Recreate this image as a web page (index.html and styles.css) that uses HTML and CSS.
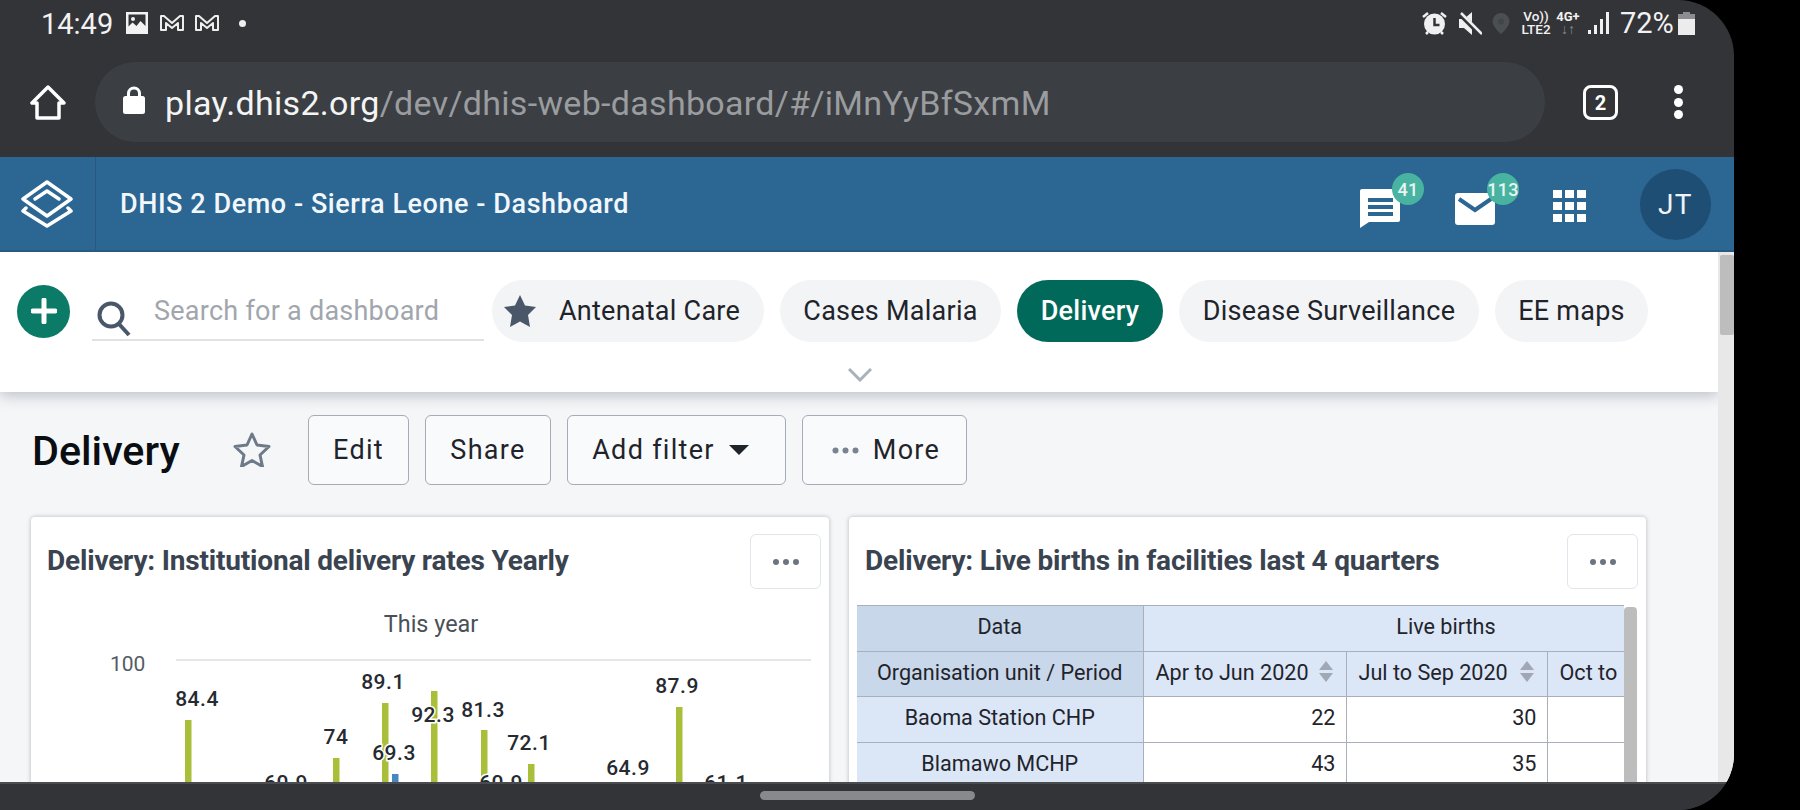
FILE: index.html
```html
<!DOCTYPE html>
<html lang="en">
<head>
<meta charset="utf-8">
<title>DHIS 2 Demo - Sierra Leone - Dashboard</title>
<link rel="stylesheet" href="styles.css">
</head>
<body>
<div class="phone">
  <div class="status">
    <span class="time">14:49</span>
    <svg class="st-img" viewBox="0 0 22 22"><path fill="#f2f2f2" fill-rule="evenodd" d="M0 0h22v22H0zM2.500 2.500v12l4-4 4 3.500 4-5 5 5v-11.500z"/><circle cx="7" cy="7" r="2" fill="#f2f2f2"/></svg>
    <svg class="st-m" viewBox="0 0 24 16"><path fill="none" stroke="#eee" stroke-width="2" stroke-linejoin="round" d="M1 1h3l8 7 8-7h3v14h-5V8l-6 5-6-5v7H1z"/></svg>
    <svg class="st-m st-m2" viewBox="0 0 24 16"><path fill="none" stroke="#eee" stroke-width="2" stroke-linejoin="round" d="M1 1h3l8 7 8-7h3v14h-5V8l-6 5-6-5v7H1z"/></svg>
    <span class="st-dot"></span>
    <span class="st-spacer"></span>
    <svg class="st-alarm" viewBox="0 0 25 24"><circle cx="12.500" cy="13" r="10.500" fill="#f0f0f0"/><path d="M12.500 7v7h5" fill="none" stroke="#323438" stroke-width="2.500"/><path d="M1 6l5-4M24 6l-5-4M6 21l-2 2M19 21l2 2" stroke="#f0f0f0" stroke-width="2.500" fill="none"/></svg>
    <svg class="st-mute" viewBox="0 0 24 23"><path fill="#f0f0f0" d="M1 7h5l8-7v23l-8-7H1z"/><path d="M1 1l21 21" stroke="#323438" stroke-width="5"/><path d="M3 1l21 21" stroke="#f0f0f0" stroke-width="2.500"/></svg>
    <svg class="st-pin" viewBox="0 0 18 21"><path fill="#4c4f52" d="M9 0a8.500 8.500 0 0 1 8.500 8.500C17.500 14 9 21 9 21S.5 14 .5 8.500A8.500 8.500 0 0 1 9 0z"/><circle cx="9" cy="8.500" r="3" fill="#434649"/></svg>
    <div class="st-net"><span>Vo))</span><span>LTE2</span></div>
    <div class="st-4g"><span>4G+</span><span class="st-arrows">↓↑</span></div>
    <svg class="st-signal" viewBox="0 0 21 22"><path fill="#f0f0f0" d="M0 18h3v4H0zM6 13h3v9H6zM12 7h3v15h-3zM18 0h3v22h-3z"/></svg>
    <span class="st-pct">72%</span>
    <svg class="st-batt" viewBox="0 0 17 23"><path fill="#8b8d90" d="M5 0h7v2h5v7H0V2h5z"/><path fill="#ececec" d="M0 7h17v16H0z"/></svg>
  </div>
  <div class="toolbar">
    <svg class="home" viewBox="0 0 36 36"><path fill="none" stroke="#fff" stroke-width="3.500" stroke-linejoin="round" d="M18 2L2 18h5v15h22V18h5z"/></svg>
    <div class="urlbar">
      <svg class="lock" viewBox="0 0 22 28"><path fill="none" stroke="#fff" stroke-width="3" d="M5.500 12V7.500a5.500 5.500 0 0 1 11 0V12"/><rect y="10" width="22" height="18" rx="2.500" fill="#fff"/></svg>
      <span class="url"><span class="url-host">play.dhis2.org</span>/dev/dhis-web-dashboard/#/iMnYyBfSxmM</span>
    </div>
    <span class="tabs">2</span>
    <span class="menu"><i></i><i></i><i></i></span>
  </div>
  <header class="appbar">
    <div class="logo-cell">
      <svg class="logo" viewBox="0 0 52 48"><g fill="none" stroke="#fff" stroke-width="3.500" stroke-linejoin="round" stroke-linecap="round"><path d="M26 2L50 19 26 36 2 19z"/><path d="M14 19l12-8 12 8"/><path d="M5 28l-3 3 24 15 24-15-3-3"/></g></svg>
    </div>
    <div class="app-title">DHIS 2 Demo - Sierra Leone - Dashboard</div>
    <div class="app-actions">
      <div class="app-icon app-chat">
        <svg viewBox="0 0 40 39"><path fill="#fff" d="M2 0h36a2 2 0 0 1 2 2v29a2 2 0 0 1-2 2H9L0 39V2a2 2 0 0 1 2-2z"/><path fill="#2c6693" d="M8 9h25v4H8zM8 16h25v4H8zM8 23h25v4H8z"/></svg>
        <span class="badge">41</span>
      </div>
      <div class="app-icon app-mail">
        <svg viewBox="0 0 40 32"><rect width="40" height="32" rx="3" fill="#fff"/><path d="M4 6l16 11L36 6" fill="none" stroke="#2c6693" stroke-width="4"/></svg>
        <span class="badge">113</span>
      </div>
      <svg class="app-grid" viewBox="0 0 33 32"><path fill="#fff" d="M0 0h9v8H0zM12 0h9v8h-9zM24 0h9v8h-9zM0 12h9v8H0zM12 12h9v8h-9zM24 12h9v8h-9zM0 24h9v8H0zM12 24h9v8h-9zM24 24h9v8h-9z"/></svg>
      <div class="avatar">JT</div>
    </div>
  </header>
  <div class="viewport">
    <div class="page">
      <div class="dash-bar">
        <div class="dash-row">
          <span class="add"><svg viewBox="0 0 26 26"><path d="M13 2v22M2 13h22" stroke="#fff" stroke-width="5" stroke-linecap="round"/></svg></span>
          <div class="search">
            <svg viewBox="0 0 34 36"><circle cx="14" cy="14" r="11.500" fill="none" stroke="#4a5768" stroke-width="4"/><path d="M22 23l10 11" stroke="#4a5768" stroke-width="4"/></svg>
            <span>Search for a dashboard</span>
          </div>
          <div class="chips">
            <span class="chip chip-star"><svg viewBox="0 0 32 32"><path fill="#4a5768" d="M16 0l5 10.500 11 1.500-8 8 2 12-10-5.500L6 32l2-12-8-8 11-1.500z"/></svg>Antenatal Care</span>
            <span class="chip chip-cases">Cases Malaria</span>
            <span class="chip chip-on">Delivery</span>
            <span class="chip chip-disease">Disease Surveillance</span>
            <span class="chip chip-ee">EE maps</span>
          </div>
        </div>
        <svg class="chev" viewBox="0 0 24 14"><path d="M1 1l11 11L23 1" fill="none" stroke="#a8b2bd" stroke-width="3"/></svg>
      </div>
      <div class="actions">
        <h1>Delivery</h1>
        <svg class="fav" viewBox="0 0 38 36"><path fill="none" stroke="#6e7a8a" stroke-width="3" stroke-linejoin="round" d="M19 3l5 11 12 1.500-9 8.500 2.500 11.500L19 29.500 8.500 35.500 11 24 2 15.500 14 14z"/></svg>
        <button class="btn btn-edit">Edit</button>
        <button class="btn btn-share">Share</button>
        <button class="btn btn-filter">Add filter<svg viewBox="0 0 20 10"><path fill="#1f242b" d="M0 0h20L10 10z"/></svg></button>
        <button class="btn btn-more"><svg viewBox="0 0 27 7"><circle cx="3.500" cy="3.500" r="3" fill="#7a838f"/><circle cx="13.500" cy="3.500" r="3" fill="#7a838f"/><circle cx="23.500" cy="3.500" r="3" fill="#7a838f"/></svg>More</button>
      </div>
      <div class="cards">
        <section class="card">
          <div class="card-head">
            <h2>Delivery: Institutional delivery rates Yearly</h2>
            <span class="card-btn"><i></i><i></i><i></i></span>
          </div>
          <svg class="chart" viewBox="31 605 798 177">
            <text class="c-title" x="431" y="632" text-anchor="middle">This year</text>
            <text class="c-axis" x="110" y="671">100</text>
            <rect x="176" y="659" width="635" height="2" fill="#e4e6e8"/>
            <g fill="#a9bf3a">
              <rect x="185" y="720" width="6.500" height="62"/>
              <rect x="333" y="758" width="6.500" height="24"/>
              <rect x="382" y="703" width="6.500" height="79"/>
              <rect x="431" y="691" width="6.500" height="91"/>
              <rect x="481" y="730" width="6.500" height="52"/>
              <rect x="528" y="764" width="6.500" height="18"/>
              <rect x="676" y="707" width="6.500" height="75"/>
            </g>
            <rect x="392" y="774" width="6.500" height="8" fill="#4a86c0"/>
            <g class="c-lab" text-anchor="middle">
              <text x="197" y="706">84.4</text>
              <text x="286" y="790">60.9</text>
              <text x="336" y="744">74</text>
              <text x="383" y="689">89.1</text>
              <text x="394" y="760">69.3</text>
              <text x="433" y="722">92.3</text>
              <text x="483" y="717">81.3</text>
              <text x="501" y="790">60.9</text>
              <text x="529" y="750">72.1</text>
              <text x="628" y="775">64.9</text>
              <text x="677" y="693">87.9</text>
              <text x="726" y="790">61.1</text>
            </g>
          </svg>
        </section>
        <section class="card">
          <div class="card-head">
            <h2>Delivery: Live births in facilities last 4 quarters</h2>
            <span class="card-btn"><i></i><i></i><i></i></span>
          </div>
          <div class="table-wrap">
            <div class="table-clip">
              <table>
                <colgroup><col class="col-a"><col class="col-b"><col class="col-c"><col class="col-d"></colgroup>
                <tr><th class="dim">Data</th><th class="dim2" colspan="3">Live births</th></tr>
                <tr>
                  <th class="dim">Organisation unit / Period</th>
                  <th class="dim2 sort">Apr to Jun 2020<svg viewBox="0 0 14 21"><path fill="#9fa8b4" d="M7 0l7 9H0zM7 21l7-9H0z"/></svg></th>
                  <th class="dim2 sort">Jul to Sep 2020<svg viewBox="0 0 14 21"><path fill="#9fa8b4" d="M7 0l7 9H0zM7 21l7-9H0z"/></svg></th>
                  <th class="dim2 sort">Oct to</th>
                </tr>
                <tr><th class="dim2">Baoma Station CHP</th><td>22</td><td>30</td><td></td></tr>
                <tr><th class="dim2">Blamawo MCHP</th><td>43</td><td>35</td><td></td></tr>
              </table>
            </div>
            <div class="table-scroll"></div>
          </div>
        </section>
      </div>
    </div>
    <div class="scrollbar"><span></span></div>
  </div>
  <div class="navbar"><span></span></div>
</div>
</body>
</html>
```
FILE: styles.css
```css
* { box-sizing: border-box; }
html, body { margin: 0; height: 100%; background: #000; overflow: hidden; }
body { font-family: Roboto, "Liberation Sans", sans-serif; }
.phone { width: 1734px; height: 810px; display: flex; flex-direction: column; background: #323438; border-radius: 0 56px 56px 0; overflow: hidden; }

.status { height: 62px; flex: none; display: flex; align-items: center; padding: 0 39px 16px 41px; color: #f2f2f2; }
.time { font-size: 29px; line-height: 1; width: 85px; margin-top: 3px; }
.st-img { width: 22px; height: 22px; }
.st-m { width: 24px; height: 16px; margin-left: 12px; }
.st-m2 { margin-left: 11px; }
.st-dot { width: 7px; height: 7px; border-radius: 50%; background: #eee; margin-left: 20px; }
.st-spacer { flex: 1; }
.st-alarm { width: 25px; height: 24px; }
.st-mute { width: 24px; height: 23px; margin-left: 11px; }
.st-pin { width: 18px; height: 21px; margin-left: 10px; }
.st-net { display: flex; flex-direction: column; align-items: center; width: 32px; margin-left: 10px; font-size: 13.500px; font-weight: 500; line-height: 13px; }
.st-4g { display: flex; flex-direction: column; align-items: center; width: 24px; margin-left: 4px; font-size: 13px; font-weight: 700; line-height: 12px; }
.st-arrows { color: #8a8c8f; font-size: 14px; }
.st-signal { width: 21px; height: 22px; margin-left: 8px; }
.st-pct { font-size: 29px; line-height: 1; margin-left: 11px; width: 58px; }
.st-batt { width: 17px; height: 23px; }

.toolbar { height: 95px; flex: none; display: flex; align-items: flex-start; }
.home { width: 36px; height: 36px; margin: 23px 0 0 30px; flex: none; }
.urlbar { width: 1450px; height: 80px; margin-left: 29px; background: #3b3f43; border-radius: 40px; display: flex; align-items: center; padding-left: 28px; flex: none; }
.lock { width: 22px; height: 28px; flex: none; margin-top: -4px; }
.url { font-size: 34px; color: #9a9c9f; margin: 2px 0 0 20px; white-space: nowrap; letter-spacing: .31px; }
.url-host { color: #f4f4f4; }
.tabs { width: 35px; height: 35px; margin: 23px 0 0 38px; border: 3.500px solid #fff; border-radius: 8px; color: #fff; font-size: 20px; font-weight: 700; display: flex; align-items: center; justify-content: center; flex: none; }
.menu { display: flex; flex-direction: column; gap: 3.500px; margin: 23px 0 0 56px; }
.menu i { width: 9px; height: 9px; border-radius: 50%; background: #fff; }

.appbar { height: 95px; flex: none; display: flex; align-items: center; background: #2c6693; border-bottom: 2px solid #285a80; }
.logo-cell { width: 96px; height: 100%; border-right: 1px solid #28597f; display: flex; align-items: center; flex: none; }
.logo { width: 52px; height: 48px; margin-left: 21px; }
.app-title { margin-left: 24px; color: #f2f7fb; font-size: 27px; font-weight: 500; letter-spacing: .56px; white-space: nowrap; }
.app-actions { margin-left: auto; display: flex; align-items: center; padding-right: 23px; }
.app-icon { position: relative; display: block; }
.app-icon svg { display: block; }
.app-chat { width: 40px; height: 39px; margin-top: 10px; }
.app-chat svg { width: 40px; height: 39px; }
.app-mail { width: 40px; height: 32px; margin: 11px 0 0 55px; }
.app-mail svg { width: 40px; height: 32px; }
.badge { position: absolute; width: 32px; height: 32px; border-radius: 50%; background: #48b3a0; color: #e8f5f2; font-size: 18px; font-weight: 500; display: flex; align-items: center; justify-content: center; letter-spacing: .2px; }
.app-chat .badge { left: 32px; top: -16px; }
.app-mail .badge { left: 32px; top: -20px; }
.app-grid { width: 33px; height: 32px; margin: 5px 0 0 58px; }
.avatar { width: 71px; height: 71px; border-radius: 50%; background: #1f4e74; color: #eef3f7; font-size: 28px; letter-spacing: 1.500px; display: flex; align-items: center; justify-content: center; margin: 2px 0 0 54px; }

.viewport { flex: 1; min-height: 0; display: flex; background: #f4f6f8; }
.page { flex: 1; min-width: 0; overflow: hidden; }
.scrollbar { width: 16px; background: #e8e8e8; padding-top: 3px; flex: none; }
.scrollbar span { display: block; width: 14px; height: 80px; background: #bdbdbd; border-radius: 2px; margin-left: 2px; }

.dash-bar { height: 140px; background: #fff; box-shadow: 0 3px 14px rgba(33, 41, 52, .28); position: relative; display: flex; flex-direction: column; align-items: center; padding-top: 28px; }
.dash-row { display: flex; align-items: center; align-self: stretch; padding-left: 17px; }
.add { width: 53px; height: 53px; border-radius: 50%; background: #0b7a66; display: flex; align-items: center; justify-content: center; flex: none; }
.add svg { width: 26px; height: 26px; }
.search { width: 392px; height: 58px; margin: 0 8px 0 22px; border-bottom: 2px solid #e0e2e5; display: flex; align-items: center; padding-left: 5px; flex: none; align-self: flex-end; transform: translateY(-1px); }
.search svg { width: 34px; height: 36px; margin-top: 16px; flex: none; }
.search span { color: #a1a6ad; font-size: 27px; margin-left: 23px; letter-spacing: .25px; white-space: nowrap; }
.chips { display: flex; gap: 16px; }
.chip { height: 62px; border-radius: 31px; background: #f3f4f6; color: #1f242b; font-size: 27px; letter-spacing: .25px; display: flex; align-items: center; justify-content: center; white-space: nowrap; }
.chip-star { width: 272px; justify-content: flex-start; padding-left: 12px; }
.chip-star svg { width: 32px; height: 32px; margin-right: 23px; }
.chip-cases { width: 221px; }
.chip-on { width: 146px; background: #00695a; color: #fff; font-weight: 500; }
.chip-disease { width: 300px; }
.chip-ee { width: 153px; }
.chev { width: 24px; height: 14px; margin: 26px 0 0 2px; }

.actions { height: 125px; display: flex; align-items: center; padding: 0 0 9px 32px; }
h1 { font-size: 41.300px; font-weight: 500; color: #0a0d12; margin: 1px 0 0; width: 201px; white-space: nowrap; }
.fav { width: 38px; height: 36px; flex: none; margin-top: -2px; }
.btn { height: 70px; border: 1.500px solid #a4acb7; border-radius: 6px; background: #f9fafb; color: #1f242b; font: 400 27px Roboto, sans-serif; letter-spacing: 1.300px; padding: 0; display: flex; align-items: center; justify-content: center; flex: none; }
.btn-edit { width: 101px; margin-left: 37px; }
.btn-share { width: 126px; margin-left: 16px; }
.btn-filter { width: 219px; margin-left: 16px; padding-right: 12px; }
.btn-filter svg { width: 20px; height: 10px; margin-left: 14px; }
.btn-more { width: 165px; margin-left: 16px; padding-left: 3px; }
.btn-more svg { width: 27px; height: 7px; margin-right: 14px; }

.cards { display: grid; grid-template-columns: 798px 797px; gap: 20px; padding-left: 31px; }
.card { background: #fff; border-radius: 4px; box-shadow: 0 0 4px rgba(33, 41, 52, .3); height: 400px; }
.card-head { height: 88px; display: flex; align-items: flex-start; justify-content: space-between; padding: 17px 8px 0 16px; }
h2 { font-size: 28px; font-weight: 700; color: #3a4350; margin: 0; line-height: 54px; white-space: nowrap; letter-spacing: -.19px; }
.card-btn { width: 71px; height: 55px; border: 1.500px solid #e2e5e9; border-radius: 6px; display: flex; align-items: center; justify-content: center; gap: 4px; flex: none; background: #fff; }
.card-btn i { width: 6px; height: 6px; border-radius: 50%; background: #6b7480; }
.chart { display: block; width: 798px; height: 177px; overflow: visible; }
.c-title { font: 400 23.400px Roboto, sans-serif; fill: #4a505a; }
.c-axis { font: 400 21px Roboto, sans-serif; fill: #555b65; }
.c-lab text { font: 500 21px Roboto, sans-serif; fill: #262a31; stroke: #fff; stroke-width: 3px; paint-order: stroke; letter-spacing: .5px; }

.table-wrap { display: flex; padding-left: 8px; }
.table-clip { width: 767px; overflow: hidden; flex: none; }
table { border-collapse: collapse; table-layout: fixed; width: 892px; font-size: 21.600px; color: #1f242b; border-top: 1px solid #a9b0ba; }
.col-a { width: 286px; }
.col-b { width: 203px; }
.col-c { width: 201px; }
.col-d { width: 202px; }
tr { height: 45.500px; }
th, td { border: 1px solid #a9b0ba; padding: 0 10px 3px; font-weight: 400; white-space: nowrap; }
th:first-child { border-left: 0; }
td { text-align: right; background: #fff; }
.dim { background: #c9d7ea; text-align: center; }
.dim2 { background: #dbe6f7; text-align: center; }
.sort { text-align: left; padding: 0 13px 3px 12px; }
.sort svg { width: 14px; height: 21px; vertical-align: middle; float: right; margin-top: 1px; }
.table-scroll { width: 13px; height: 200px; margin-top: 2px; background: #bdbdbd; border-radius: 4px 4px 0 0; flex: none; }

.navbar { height: 28px; flex: none; background: #323438; border-top: 2px solid #4a4c50; display: flex; justify-content: center; padding-top: 7px; position: relative; }
.navbar span { width: 215px; height: 9px; border-radius: 5px; background: #87898c; margin-left: 1px; }
```
